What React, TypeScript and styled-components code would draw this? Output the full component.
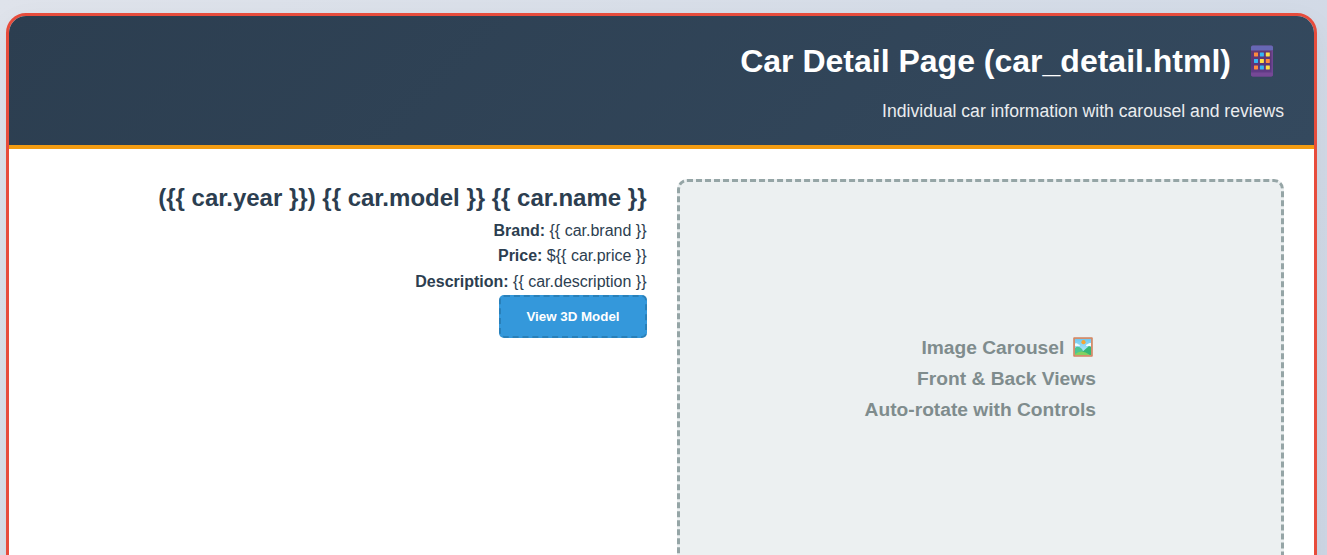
import React from "react";
import styled, { createGlobalStyle } from "styled-components";

const GlobalStyle = createGlobalStyle`
  * { box-sizing: border-box; margin: 0; padding: 0; }
  html, body { height: 100%; overflow: hidden; }
  body {
    font-family: "Liberation Sans", Arial, sans-serif;
    font-size: 16px;
    line-height: 1.6;
    color: #2c3e50;
    background: #d8dee9;
  }
`;

const Page = styled.div`
  height: 555px;
  overflow: hidden;
  padding: 13px 10px 0 6px;
  background: linear-gradient(135deg, #dfe3eb 0%, #d5dce7 50%, #ced7e5 100%);
`;

const Card = styled.section`
  height: 700px;
  border: 3px solid #e74c3c;
  border-radius: 20px;
  overflow: hidden;
  background: #fff;
  box-shadow: 0 10px 30px rgba(0, 0, 0, 0.05);
`;

const Header = styled.header`
  padding: 20px 30px;
  text-align: right;
  color: #fff;
  background: linear-gradient(135deg, #2c3e50, #34495e);
  border-bottom: 4px solid #f39c12;
`;

const Title = styled.h1`
  display: flex;
  justify-content: flex-end;
  align-items: center;
  gap: 19px;
  padding-right: 10px;
  margin-bottom: 10px;
  font-size: 32px;
  line-height: 51.2px;

  svg {
    margin-bottom: 2px;
  }
`;

const Subtitle = styled.p`
  font-size: 17.6px;
  opacity: 0.9;
`;

const Content = styled.div`
  display: grid;
  grid-template-columns: 1fr 1fr;
  gap: 30px;
  padding: 30px;
`;

const Info = styled.div`
  text-align: right;
`;

const CarName = styled.h2`
  font-size: 24px;
`;

const ModelButton = styled.button`
  display: block;
  margin-left: auto;
  padding: 12px 25px;
  border: 2px dashed #2980b9;
  border-radius: 5px;
  background: #3498db;
  color: #fff;
  font: bold 13.333px "Liberation Sans", Arial, sans-serif;
`;

const Carousel = styled.div`
  display: flex;
  align-items: center;
  justify-content: center;
  height: 400px;
  border: 3px dashed #95a5a6;
  border-radius: 10px;
  background: #ecf0f1;
  color: #7f8c8d;
  font-size: 19.2px;
  font-weight: bold;
  text-align: right;
`;

const CarouselLine = styled.div`
  display: flex;
  align-items: center;
  justify-content: flex-end;
`;

const PictureSlot = styled.span`
  display: flex;
  margin: 0 3px 3px 8.6px;
`;

const dots = [
  ["#ff8a3d", "#35b8f5", "#ffdf45"],
  ["#35b8f5", "#ffdf45", "#ff8a3d"],
  ["#ff8a3d", "#35b8f5", "#ffdf45"],
];

const PhoneIcon = () => (
  <svg width="24" height="32" viewBox="0 0 24 32">
    <defs>
      <linearGradient id="phoneBody" x1="0" y1="0" x2="0" y2="1">
        <stop offset="0" stopColor="#663a70" />
        <stop offset="0.65" stopColor="#57357c" />
        <stop offset="1" stopColor="#67408d" />
      </linearGradient>
    </defs>
    <rect x="1" y="0.5" width="22" height="31" rx="1.8" fill="url(#phoneBody)" />
    <path d="M2.8.5h18.4A1.8 1.8 0 0 1 23 2.3V5.5H1V2.3A1.8 1.8 0 0 1 2.8.5Z" fill="#6768b5" />
    <path d="M1 27.5h22v2.2a1.8 1.8 0 0 1-1.8 1.8H2.8A1.8 1.8 0 0 1 1 29.7Z" fill="#764896" />
    <path d="M22.2 5.5V28" stroke="#704894" strokeWidth="1.5" />
    {dots.map((row, y) =>
      row.map((fill, x) => (
        <rect key={`${x}-${y}`} x={4 + x * 5.9} y={7.4 + y * 6.5} width="4" height="4" rx="0.4" fill={fill} />
      ))
    )}
  </svg>
);

const PictureIcon = () => (
  <svg width="20" height="20" viewBox="0 0 20 20">
    <defs>
      <linearGradient id="sky" x1="0" y1="0" x2="0" y2="1">
        <stop offset="0" stopColor="#70c9f2" />
        <stop offset="1" stopColor="#c2effb" />
      </linearGradient>
    </defs>
    <rect x="0.2" y="0.2" width="19.6" height="19.6" rx="0.7" fill="#d89472" />
    <rect x="2" y="2" width="16" height="16" fill="url(#sky)" />
    <path d="M2 9V6.5q2-1 3 .8q2 0 2 1.7ZM18 9V6q-2-.4-3 1q-2 0-2 2Z" fill="#effcff" />
    <circle cx="10.5" cy="5.2" r="2.1" fill="#f5a534" />
    <path d="M2 11q3-3 7 1l3 6H2Z" fill="#4bc693" />
    <path d="M8 16 16 9l2 1v8H8Z" fill="#36b775" />
    <path d="M2 17Q9 11.5 17 18H2Z" fill="#83d161" />
    <path d="M1 19V1h18v18Z" fill="none" stroke="#c77e60" strokeWidth="0.5" />
  </svg>
);

export default function App() {
  return (
    <>
      <GlobalStyle />
      <Page>
        <Card>
          <Header>
            <Title>
              <span>Car Detail Page (car_detail.html)</span>
              <PhoneIcon />
            </Title>
            <Subtitle>Individual car information with carousel and reviews</Subtitle>
          </Header>
          <Content>
            <Info>
              <CarName>{"({{ car.year }}) {{ car.model }} {{ car.name }}"}</CarName>
              <p><strong>Brand:</strong>{" {{ car.brand }}"}</p>
              <p><strong>Price:</strong>{" ${{ car.price }}"}</p>
              <p><strong>Description:</strong>{" {{ car.description }}"}</p>
              <ModelButton>View 3D Model</ModelButton>
            </Info>
            <Carousel>
              <div>
                <CarouselLine>
                  <span>Image Carousel</span>
                  <PictureSlot><PictureIcon /></PictureSlot>
                </CarouselLine>
                <CarouselLine>Front &amp; Back Views</CarouselLine>
                <CarouselLine>Auto-rotate with Controls</CarouselLine>
              </div>
            </Carousel>
          </Content>
        </Card>
      </Page>
    </>
  );
}
